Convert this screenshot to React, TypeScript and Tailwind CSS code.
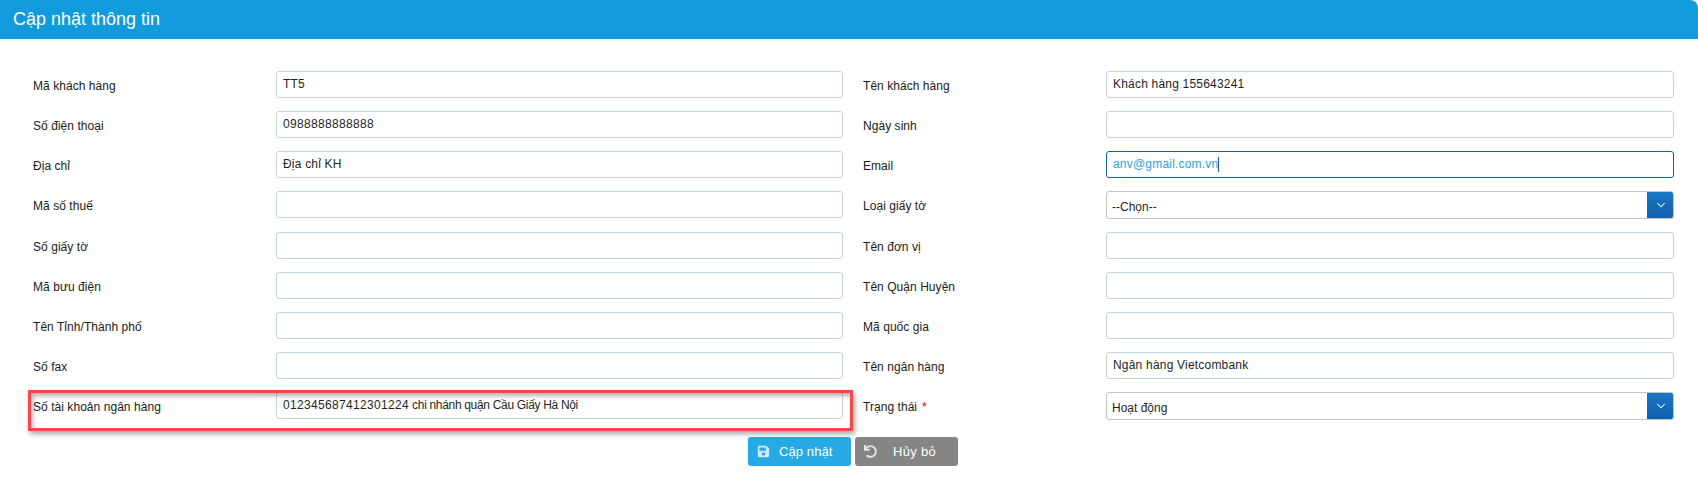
import React from "react";
import { FaSave, FaUndo } from "react-icons/fa";
import { ChevronDown } from "lucide-react";

function Label({ children, required }: { children: React.ReactNode; required?: boolean }) {
  return (
    <div className="w-[243px] shrink-0 pt-[2px] text-[12px] tracking-[0.05px] text-[#1a1a1a]">
      {children}
      {required && <span className="ml-[5px] text-[#e60000]">*</span>}
    </div>
  );
}

function Input({ value, focus }: { value?: React.ReactNode; focus?: boolean }) {
  return (
    <div
      className={
        "flex h-[27px] min-w-0 flex-1 items-center self-start rounded-[3px] border bg-white px-[6px] text-[12px] tracking-[0.2px] " +
        (focus ? "border-[#1464a5] text-[#1ea5e8]" : "border-[#c3d4e0] text-[#1f1f1f]")
      }
    >
      <span className="pb-[1px]">{value}</span>
      {focus && <span className="h-[15px] w-px bg-[#1464a5]" />}
    </div>
  );
}

function Select({ value }: { value?: React.ReactNode }) {
  return (
    <div className="flex h-[28px] flex-1 overflow-hidden rounded-[3px] border border-[#c4c4c4] bg-white text-[12px] text-[#1f1f1f]">
      <div className="flex flex-1 items-center px-[5px] pt-[4px]">{value}</div>
      <div className="-my-px -mr-px flex w-[27px] items-center justify-center bg-gradient-to-b from-[#1a78c8] to-[#0f5fa8] text-white">
        <ChevronDown size={14} strokeWidth={1.75} />
      </div>
    </div>
  );
}

type Cell = { label: string; value?: React.ReactNode; focus?: boolean; select?: boolean; required?: boolean };

const rows: { h: string; left: Cell; right: Cell }[] = [
  { h: "h-[27px]", left: { label: "Mã khách hàng", value: "TT5" }, right: { label: "Tên khách hàng", value: "Khách hàng 155643241" } },
  { h: "h-[27px]", left: { label: "Số điện thoại", value: <span className="tracking-[0.33px]">0988888888888</span> }, right: { label: "Ngày sinh" } },
  { h: "h-[27px]", left: { label: "Địa chỉ", value: "Địa chỉ KH" }, right: { label: "Email", value: "anv@gmail.com.vn", focus: true } },
  { h: "h-[28px]", left: { label: "Mã số thuế" }, right: { label: "Loại giấy tờ", value: "--Chọn--", select: true } },
  { h: "h-[27px]", left: { label: "Số giấy tờ" }, right: { label: "Tên đơn vị" } },
  { h: "h-[27px]", left: { label: "Mã bưu điện" }, right: { label: "Tên Quận Huyện" } },
  { h: "h-[27px]", left: { label: "Tên Tỉnh/Thành phố" }, right: { label: "Mã quốc gia" } },
  { h: "h-[27px]", left: { label: "Số fax" }, right: { label: "Tên ngân hàng", value: "Ngân hàng Vietcombank" } },
  {
    h: "h-[28px]",
    left: {
      label: "Số tài khoản ngân hàng",
      value: (
        <>
          <span className="tracking-[0.33px]">012345687412301224</span>
          <span className="tracking-[-0.32px]"> chi nhánh quận Cầu Giấy Hà Nội</span>
        </>
      ),
    },
    right: { label: "Trạng thái", value: "Hoạt động", select: true, required: true },
  },
];

export default function App() {
  return (
    <div className="relative h-[485px] w-[1698px] overflow-hidden bg-white font-['Liberation_Sans',Arial,sans-serif]">
      <div className="flex h-[39px] items-center rounded-tr-[8px] bg-[#119bdd] pb-[1px] pl-[13px] text-[18px] text-white">
        Cập nhật thông tin
      </div>

      <div className="flex flex-col gap-[13px] pl-[33px] pr-[24px] pt-[32px]">
        {rows.map((r) => (
          <div key={r.left.label} className={`flex items-center ${r.h}`}>
            <div className="flex h-full w-[810px] items-center">
              <Label>{r.left.label}</Label>
              <Input value={r.left.value} />
            </div>
            <div className="ml-[20px] flex h-full flex-1 items-center">
              <Label required={r.right.required}>{r.right.label}</Label>
              {r.right.select ? <Select value={r.right.value} /> : <Input value={r.right.value} focus={r.right.focus} />}
            </div>
          </div>
        ))}
      </div>

      <div className="mt-[17px] flex gap-[4px] pl-[748px]">
        <button className="flex h-[29px] w-[103px] items-center rounded-[3px] bg-[#27a9e3] pl-[9px] text-[13px] tracking-[0.1px] text-white">
          <FaSave size={13} className="text-[#cfe9f6]" />
          <span className="ml-[9px]">Cập nhật</span>
        </button>
        <button className="flex h-[29px] w-[103px] items-center rounded-[3px] bg-[#858585] pl-[9px] text-[13px] tracking-[0.3px] text-white">
          <FaUndo size={13} className="text-[#e6e6e6]" />
          <span className="ml-[16px]">Hủy bỏ</span>
        </button>
      </div>

      <div className="pointer-events-none absolute left-[28px] top-[390px] h-[41px] w-[825px] border-[3px] border-[#fb4548] shadow-[2px_3px_5px_rgba(0,0,0,0.35),inset_2px_3px_4px_rgba(0,0,0,0.3)]" />
    </div>
  );
}
